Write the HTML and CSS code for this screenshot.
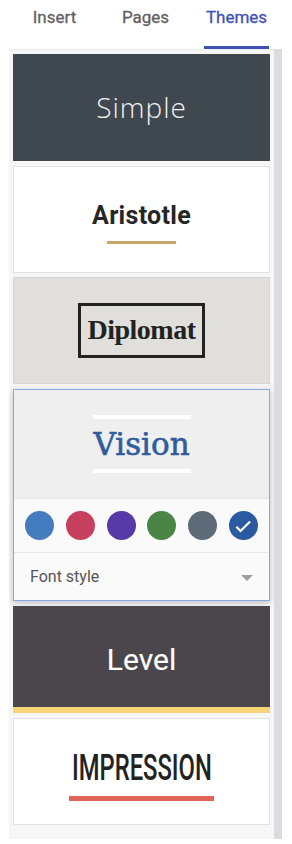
FILE: index.html
```html
<!DOCTYPE html>
<html lang="en">
<head>
    <meta charset="UTF-8">
    <meta name="viewport" content="width=device-width, initial-scale=1.0">
    <title>Themes</title>
    <link rel="stylesheet" href="styles.css">
</head>
<body>
    <div class="sidebar">
        <!-- Tabs -->
        <div class="tabs">
            <div class="tab"><span>Insert</span></div>
            <div class="tab"><span>Pages</span></div>
            <div class="tab active"><span>Themes</span></div>
        </div>

        <!-- Theme list with scrollbar -->
        <div class="panel">
            <div class="list">
                <div class="theme simple">Simple</div>

                <div class="theme aristotle">
                    <span class="name">Aristotle</span>
                    <span class="rule"></span>
                </div>

                <div class="theme diplomat">
                    <span class="box">Diplomat</span>
                </div>

                <div class="theme vision selected">
                    <div class="preview">
                        <span class="bar"></span>
                        <span class="name">Vision</span>
                        <span class="bar"></span>
                    </div>
                    <div class="colors">
                        <span class="dot" style="background-color: #457cbf;"></span>
                        <span class="dot" style="background-color: #c7415f;"></span>
                        <span class="dot" style="background-color: #5739a8;"></span>
                        <span class="dot" style="background-color: #4a8545;"></span>
                        <span class="dot" style="background-color: #5d6a78;"></span>
                        <span class="dot checked" style="background-color: #2c5aa0;">
                            <svg width="20" height="20" viewBox="0 0 24 24"><path d="M4 13l5 5L20.5 6.5" fill="none" stroke="#fff" stroke-width="2.6"/></svg>
                        </span>
                    </div>
                    <div class="font-row">
                        <span>Font style</span>
                        <span class="caret"></span>
                    </div>
                </div>

                <div class="theme level">Level</div>

                <div class="theme impression">
                    <span class="name">IMPRESSION</span>
                    <span class="rule"></span>
                </div>
            </div>
            <div class="scrollbar"></div>
        </div>
    </div>
</body>
</html>
```

FILE: styles.css
```css
body {
    margin: 0;
    padding: 0;
    font-family: Roboto, "Noto Sans", sans-serif;
    background-color: #fff;
}

.sidebar {
    margin-left: 9px;
    width: 273px;
}

.tabs {
    display: flex;
    height: 49px;
}

.tab {
    flex: 1;
    display: flex;
    justify-content: center;
    align-items: flex-end;
}

.tab span {
    font-size: 17px;
    font-weight: 400;
    line-height: 20px;
    color: #5f5f5f;
    padding: 0 2px 19px;
    border-bottom: 3px solid transparent;
    -webkit-text-stroke: 0.3px #5f5f5f;
}

.tab.active span {
    color: #3f51b5;
    border-bottom-color: #3f51b5;
    -webkit-text-stroke: 0.3px #3f51b5;
}

.panel {
    display: flex;
    height: 790px;
}

.list {
    flex: 1;
    display: flex;
    flex-direction: column;
    gap: 5px;
    padding: 4px 4px 14px;
    background-color: #f6f6f6;
    border-top: 1px solid #ececec;
}

.scrollbar {
    width: 8px;
    background-color: #dadce0;
}

.theme {
    height: 107px;
    box-sizing: border-box;
    display: flex;
    flex-direction: column;
    align-items: center;
    justify-content: center;
    flex-shrink: 0;
}

.simple {
    background-color: #3f474f;
    color: #f2f2f2;
    font-family: "Open Sans", sans-serif;
    font-weight: 300;
    font-size: 28px;
    letter-spacing: 1px;
    padding-bottom: 2px;
}

.aristotle {
    background-color: #fff;
    border: 1px solid #e3e3e3;
    padding-top: 6px;
}

.aristotle .name {
    font-size: 25px;
    font-weight: 700;
    color: #262626;
    letter-spacing: 0.3px;
    line-height: 30px;
}

.aristotle .rule {
    width: 69px;
    height: 3px;
    margin-top: 10px;
    background-color: #c8a66c;
}

.diplomat {
    background-color: #e0dfdc;
    border: 1px solid #d6d5d2;
    margin-top: -1px;
}

.diplomat .box {
    width: 127px;
    height: 55px;
    box-sizing: border-box;
    border: 3.5px solid #222;
    display: flex;
    align-items: center;
    justify-content: center;
    font-family: "Liberation Serif", serif;
    font-weight: 700;
    font-size: 28px;
    letter-spacing: -0.5px;
    color: #222;
    padding-bottom: 2px;
}

.vision {
    height: 212px;
    justify-content: flex-start;
    align-items: stretch;
    border: 1px solid #86a8e6;
    box-shadow: 0 2px 6px rgba(0, 0, 0, 0.22);
    background-color: #fafafa;
}

.vision .preview {
    height: 108px;
    background-color: #efefef;
    display: flex;
    flex-direction: column;
    align-items: center;
    justify-content: center;
}

.vision .bar {
    width: 98px;
    height: 4px;
    background-color: #fff;
}

.vision .name {
    font-family: "DejaVu Serif", serif;
    font-size: 31px;
    color: #2f5c9f;
    line-height: 50px;
    -webkit-text-stroke: 0.6px #2f5c9f;
}

.colors {
    height: 53px;
    border-top: 1px solid #e6e6e6;
    display: flex;
    align-items: center;
    justify-content: space-between;
    padding: 0 11px;
}

.dot {
    width: 29px;
    height: 29px;
    border-radius: 50%;
    display: flex;
    align-items: center;
    justify-content: center;
}

.font-row {
    height: 47px;
    border-top: 1px solid #e6e6e6;
    display: flex;
    align-items: center;
    justify-content: space-between;
    padding: 0 16px 0 16px;
    font-size: 16px;
    color: #555;
}

.caret {
    width: 0;
    height: 0;
    border-left: 6px solid transparent;
    border-right: 6px solid transparent;
    border-top: 6px solid #9e9e9e;
    margin-top: 2px;
}

.level {
    background-color: #4b464b;
    border-bottom: 6px solid #f5d47a;
    color: #fff;
    font-size: 30px;
    font-weight: 400;
    padding-top: 6px;
    -webkit-text-stroke: 0.15px #fff;
}

.impression {
    background-color: #fff;
    border: 1px solid #e3e3e3;
    padding-top: 6px;
}

.impression .name {
    display: inline-block;
    font-size: 36px;
    font-weight: 500;
    color: #222;
    line-height: 40px;
    transform: scaleX(0.66);
}

.impression .rule {
    width: 145px;
    height: 5px;
    margin-top: 8px;
    background-color: #e06559;
}
```
